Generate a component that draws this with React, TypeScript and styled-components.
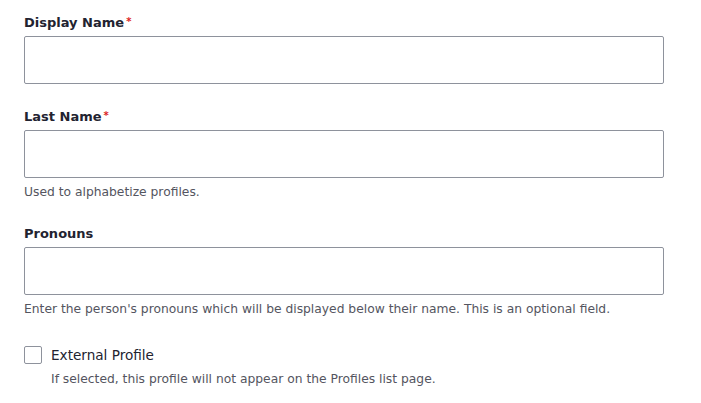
import React from 'react';
import styled, { createGlobalStyle } from 'styled-components';

const GlobalStyle = createGlobalStyle`
  body {
    margin: 0;
    background: #fff;
    font-family: "DejaVu Sans", "Liberation Sans", sans-serif;
    color: #222330;
  }
`;

const Form = styled.form`
  display: flex;
  flex-direction: column;
  gap: 23px;
  padding: 13px 37px 0 24px;
`;

const Field = styled.div`
  display: flex;
  flex-direction: column;
`;

const Label = styled.label`
  font-size: 13px;
  font-weight: 700;
  line-height: 20px;
  margin-bottom: 3px;
`;

const Required = styled.span`
  color: #dc2323;
  font-size: 10px;
  margin-left: 2px;
  vertical-align: top;
  line-height: 18px;
`;

const TextInput = styled.input`
  box-sizing: border-box;
  width: 640px;
  height: 48px;
  border: 1px solid #8e929c;
  border-radius: 2px;
  background: #fff;
  font: inherit;
  padding: 0 12px;
`;

const Description = styled.div<{ $indent?: boolean }>`
  font-size: 12.3px;
  line-height: 18px;
  color: #545560;
  margin-top: 5px;
  padding-left: ${(p) => (p.$indent ? '27px' : '0')};
`;

const CheckRow = styled.label`
  display: flex;
  align-items: center;
  gap: 9px;
  font-size: 13.6px;
  line-height: 20px;
  margin-top: 4px;
`;

const CheckBox = styled.span`
  box-sizing: border-box;
  width: 18px;
  height: 18px;
  border: 1px solid #8e929c;
  border-radius: 2px;
  background: #fff;
`;

const App: React.FC = () => {
  return (
    <>
      <GlobalStyle />
      <Form>
        <Field>
          <Label>
            Display Name<Required>*</Required>
          </Label>
          <TextInput type="text" />
        </Field>
        <Field>
          <Label>
            Last Name<Required>*</Required>
          </Label>
          <TextInput type="text" />
          <Description>Used to alphabetize profiles.</Description>
        </Field>
        <Field>
          <Label>Pronouns</Label>
          <TextInput type="text" />
          <Description>
            Enter the person's pronouns which will be displayed below their name. This is an
            optional field.
          </Description>
        </Field>
        <Field>
          <CheckRow>
            <CheckBox />
            External Profile
          </CheckRow>
          <Description $indent>
            If selected, this profile will not appear on the Profiles list page.
          </Description>
        </Field>
      </Form>
    </>
  );
};

export default App;
